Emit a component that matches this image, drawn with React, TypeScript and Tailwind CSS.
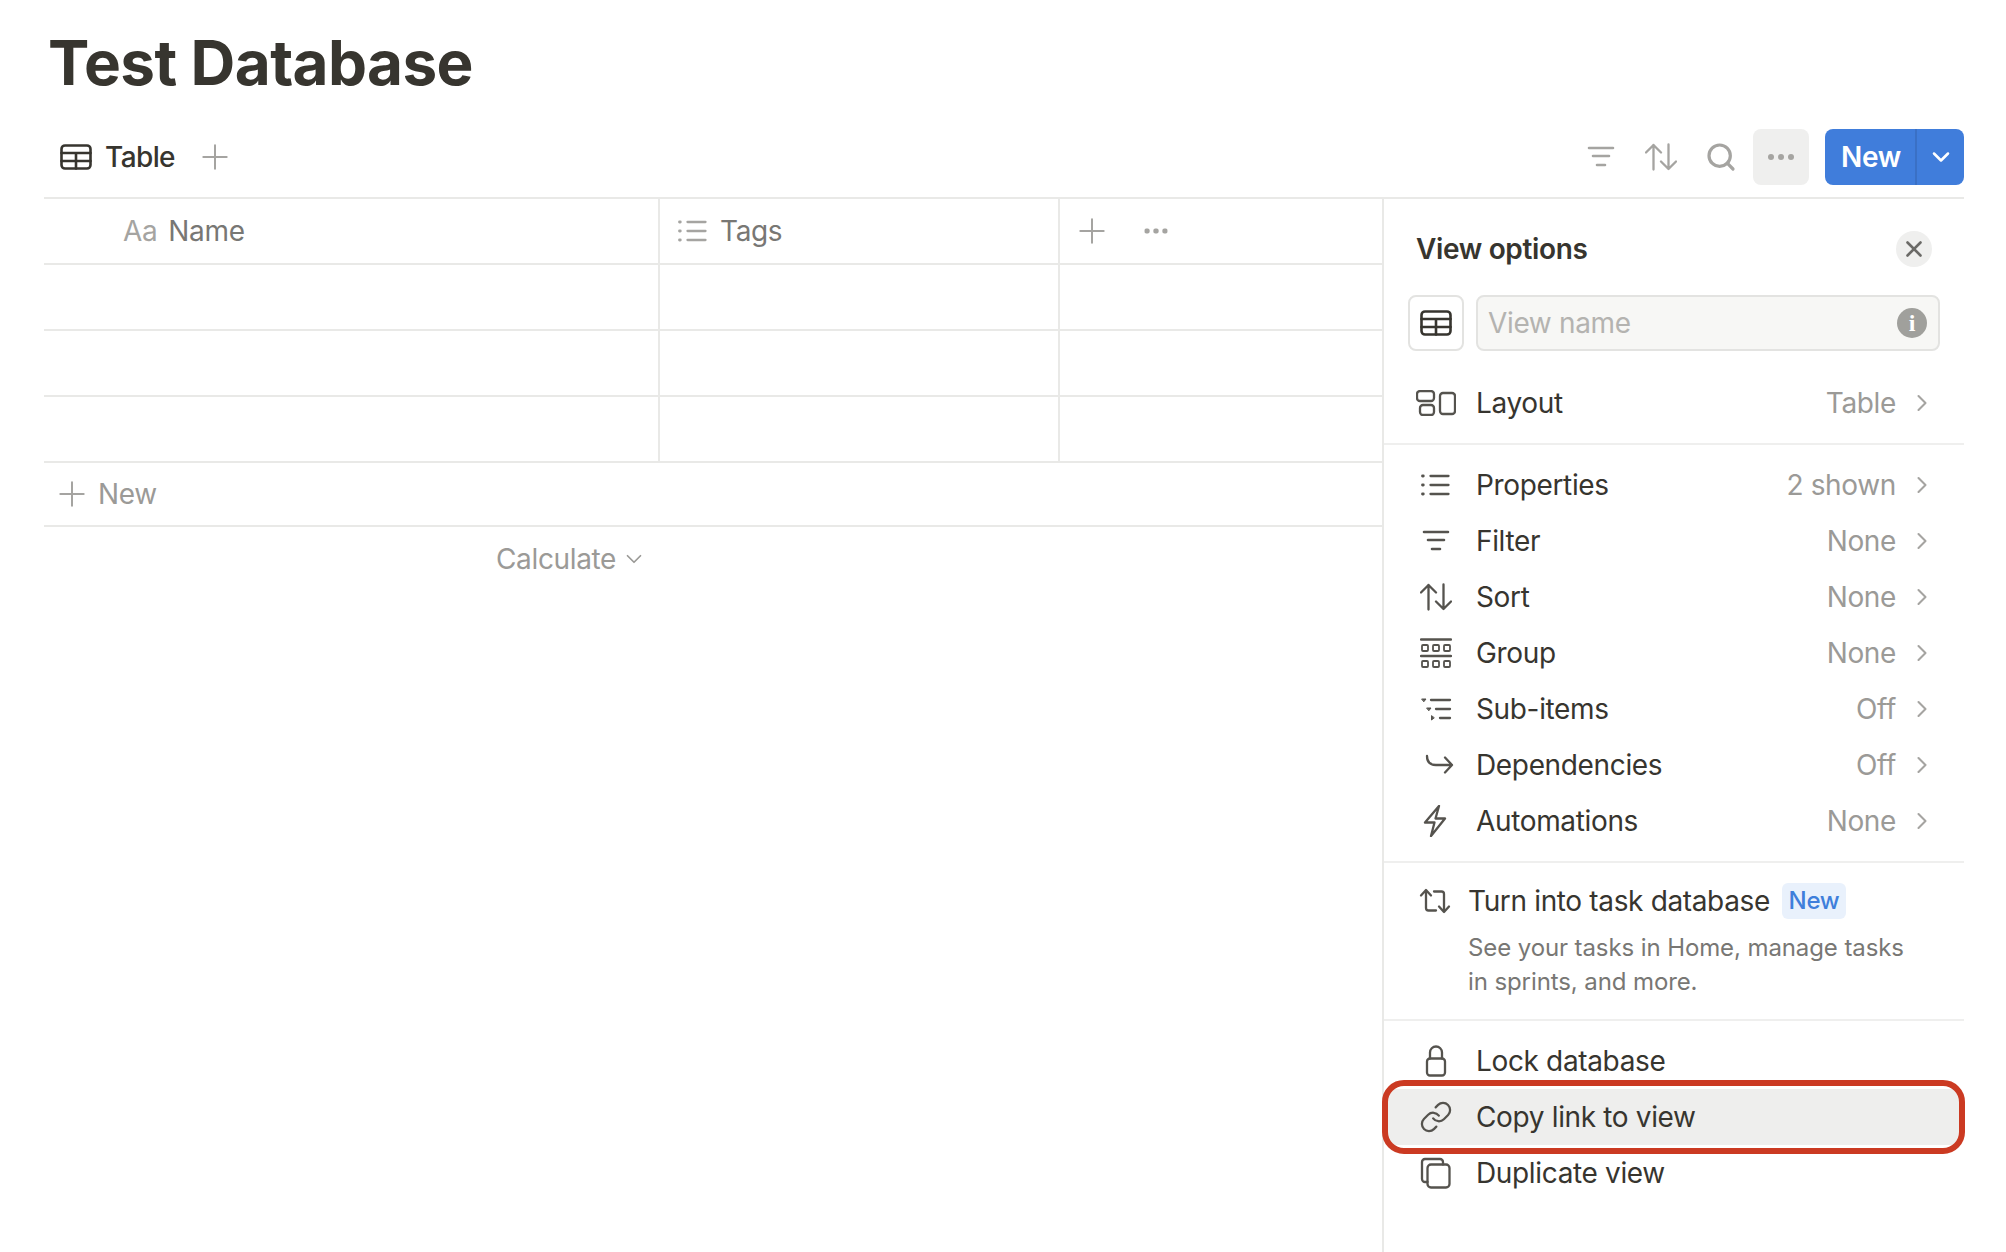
import React from 'react';
import { ChevronDown, ChevronRight, Link, Plus, Search, X } from 'lucide-react';

type IconProps = { className?: string };

const Svg: React.FC<React.PropsWithChildren<IconProps & { w?: number; h?: number }>> = ({ w = 32, h = 32, className, children }) => (
  <svg
    width={w}
    height={h}
    viewBox={`0 0 ${w} ${h}`}
    fill="none"
    stroke="currentColor"
    strokeWidth="2.3"
    strokeLinecap="round"
    strokeLinejoin="round"
    className={className}
  >
    {children}
  </svg>
);

const TableIcon: React.FC<IconProps> = ({ className }) => (
  <Svg className={className}>
    <rect x="1.5" y="4.5" width="29" height="23" rx="3.5" strokeWidth="2.6" />
    <path d="M1.5 12h29M1.5 20h29M16 12v15.500" strokeWidth="2.6" />
  </Svg>
);

const LayoutIcon = () => (
  <Svg w={40} h={26}>
    <rect x="1" y="1" width="17" height="10" rx="3" />
    <rect x="4" y="15" width="14" height="10" rx="3" />
    <rect x="24" y="3" width="15" height="21" rx="3" />
  </Svg>
);

const ListIcon: React.FC<IconProps> = ({ className }) => (
  <Svg className={className}>
    <path d="M10.500 7h18M10.500 16h18M10.500 25h18" />
    <path d="M2.500 7h.8M2.500 16h.8M2.500 25h.8" strokeWidth="2.8" />
  </Svg>
);

const FilterIcon: React.FC<IconProps> = ({ className }) => (
  <Svg className={className}>
    <path d="M4 7h24M8 15h16M12 24h8" strokeWidth="2.6" />
  </Svg>
);

const SortIcon: React.FC<IconProps> = ({ className }) => (
  <Svg className={className}>
    <path d="M8.500 28.500V4M1 11.500l7.500-7.500 7.500 7.500" />
    <path d="M23.500 3.500V28M16 20.500l7.500 7.500 7.500-7.500" />
  </Svg>
);

const GroupIcon = () => (
  <Svg>
    <path d="M1 2.500h30M1 19h30" />
    <rect x="2" y="8" width="6" height="6" rx="1" strokeWidth="1.8" />
    <rect x="13" y="8" width="6" height="6" rx="1" strokeWidth="1.8" />
    <rect x="24" y="8" width="6" height="6" rx="1" strokeWidth="1.8" />
    <rect x="2" y="24" width="6" height="6" rx="1" strokeWidth="1.8" />
    <rect x="13" y="24" width="6" height="6" rx="1" strokeWidth="1.8" />
    <rect x="24" y="24" width="6" height="6" rx="1" strokeWidth="1.8" />
  </Svg>
);

const SubItemsIcon = () => (
  <Svg>
    <path d="M11 7h19M16 16h14M20 25h10" />
    <path d="M2 6h4l-2 2.500zM7 15h4l-2 2.500zM11.500 23v4l2.500-2z" fill="currentColor" strokeWidth="1" />
  </Svg>
);

const DependencyIcon = () => (
  <Svg className="translate-x-[3px]">
    <path d="M4 7c0 6 3 9 9 9h16M22 8.500l7 7.500-7 7.500" />
  </Svg>
);

const BoltIcon = () => (
  <Svg>
    <path d="M19 1 5 17.500h9.500L11 31 25 13.500h-9.500z" />
  </Svg>
);

const TaskIcon = () => (
  <Svg>
    <path d="M2 10.500l5-5.500 5 5.500M7 5.500V23a2.500 2.500 0 0 0 2.500 2.500H17" />
    <path d="M30 21.500 25 27l-5-5.500M25 26.500V9A2.500 2.500 0 0 0 22.500 6.500H15" />
  </Svg>
);

const LockIcon = () => (
  <Svg>
    <rect x="7" y="13.500" width="18" height="17" rx="3" />
    <path d="M10 13.500V7.500a6 6 0 0 1 12 0v6" />
  </Svg>
);

const DuplicateIcon = () => (
  <Svg>
    <rect x="7.500" y="7.500" width="22" height="23" rx="3.500" />
    <path d="M7.500 25H5a3 3 0 0 1-3-3V5a3 3 0 0 1 3-3h15a3 3 0 0 1 3 3v2.500" />
  </Svg>
);

const Dots: React.FC<IconProps> = ({ className }) => (
  <svg width="26" height="6" viewBox="0 0 26 6" fill="currentColor" className={className}>
    <circle cx="3" cy="3" r="3" />
    <circle cx="13" cy="3" r="3" />
    <circle cx="23" cy="3" r="3" />
  </svg>
);

const OptionRow: React.FC<{ icon: React.ReactNode; label: string; value?: string }> = ({ icon, label, value }) => (
  <div className="flex h-14 items-center pl-[30px] pr-[28px]">
    <span className="mr-[18px] flex w-[44px] shrink-0 items-center justify-center text-[#55534e]">{icon}</span>
    <span className="flex-1 text-[#37352f]">{label}</span>
    {value && (
      <>
        <span className="text-[#9b9a97]">{value}</span>
        <ChevronRight size={28} strokeWidth={1.8} className="ml-[12px] text-[#a5a4a1]" />
      </>
    )}
  </div>
);

const rows = [0, 1, 2];

export default function App() {
  return (
    <div className="h-[1252px] w-[2006px] overflow-hidden bg-white font-['Inter',sans-serif] text-[28px] tracking-[-0.35px] text-[#37352f]">
      <h1 className="pl-[48px] pt-[23px] text-[62px] font-bold leading-[80px] tracking-[-0.6px]">Test Database</h1>

      {/* Toolbar */}
      <div className="ml-[44px] mr-[42px] mt-[26px] flex items-center justify-between border-b-2 border-[#e9e9e7] pb-[12px]">
        <div className="flex h-14 items-center pl-[16px]">
          <TableIcon className="text-[#37352f]" />
          <span className="ml-[13px] font-medium tracking-[-0.6px]">Table</span>
          <Plus size={40} strokeWidth={1.2} className="ml-[20px] text-[#a5a4a1]" />
        </div>
        <div className="flex items-center gap-1 text-[#a5a4a1]">
          <button className="flex h-14 w-14 items-center justify-center"><FilterIcon /></button>
          <button className="flex h-14 w-14 items-center justify-center"><SortIcon /></button>
          <button className="flex h-14 w-14 items-center justify-center"><Search size={32} strokeWidth={2.4} /></button>
          <button className="flex h-14 w-14 items-center justify-center rounded-lg bg-[#efefee]"><Dots /></button>
          <div className="ml-3 flex h-14 w-[139px] overflow-hidden rounded-lg bg-[#407ddb] text-white">
            <span className="flex w-[92px] items-center justify-center border-r-2 border-[#3a70c5] pl-[2px] font-semibold">New</span>
            <span className="flex flex-1 items-center justify-center"><ChevronDown size={28} strokeWidth={2.2} /></span>
          </div>
        </div>
      </div>

      <div className="ml-[44px] mr-[42px] flex">
        {/* Table */}
        <div className="min-w-0 flex-1">
          <div className="flex h-[66px] border-b-2 border-[#e9e9e7] text-[#787774]">
            <div className="flex w-[616px] items-center border-r-2 border-[#e9e9e7] pl-[79px]">
              <span className="text-[#a5a4a1]">Aa</span>
              <span className="ml-[11px]">Name</span>
            </div>
            <div className="flex w-[400px] items-center border-r-2 border-[#e9e9e7] pl-[17px]">
              <ListIcon className="text-[#a5a4a1]" />
              <span className="ml-[11px]">Tags</span>
            </div>
            <div className="flex flex-1 items-center pl-[12px] text-[#a5a4a1]">
              <Plus size={40} strokeWidth={1.2} />
              <Dots className="ml-[31px] scale-90" />
            </div>
          </div>
          {rows.map((r) => (
            <div key={r} className="flex h-[66px] border-b-2 border-[#e9e9e7]">
              <div className="w-[616px] border-r-2 border-[#e9e9e7]" />
              <div className="w-[400px] border-r-2 border-[#e9e9e7]" />
            </div>
          ))}
          <div className="flex h-[64px] items-center border-b-2 border-[#e9e9e7] pl-[8px] text-[#9b9a97]">
            <Plus size={40} strokeWidth={1.2} className="text-[#a5a4a1]" />
            <span className="ml-[6px]">New</span>
          </div>
          <div className="flex h-[64px] items-center pl-[452px] text-[#9b9a97]">
            <span>Calculate</span>
            <ChevronDown size={26} strokeWidth={1.6} className="ml-[5px]" />
          </div>
        </div>

        {/* View options panel */}
        <div className="h-[1053px] w-[582px] shrink-0 border-l-2 border-[#e9e9e7]">
          <div className="mt-[32px] flex h-9 items-center justify-between pl-[32px] pr-[32px]">
            <span className="font-semibold">View options</span>
            <span className="flex h-9 w-9 items-center justify-center rounded-full bg-[#efefee] text-[#6b6a67]">
              <X size={26} strokeWidth={2.4} />
            </span>
          </div>

          <div className="mt-[28px] flex h-14 pl-[24px] pr-[24px]">
            <span className="flex h-14 w-14 items-center justify-center rounded-lg border-2 border-[#e3e3e1] text-[#37352f]">
              <TableIcon />
            </span>
            <div className="relative ml-3 flex flex-1 items-center rounded-lg border-2 border-[#e3e3e1] bg-[#f7f7f5] pl-[10px] text-[#b4b3b0]">
              View name
              <span className="absolute right-[11px] top-[11px] flex h-[30px] w-[30px] items-center justify-center rounded-full bg-[#a0a09c] font-['Liberation_Serif',serif] text-[24px] font-bold leading-none text-white">i</span>
            </div>
          </div>

          <div className="mt-[24px]">
            <OptionRow icon={<LayoutIcon />} label="Layout" value="Table" />
          </div>
          <div className="mt-[12px] h-[2px] bg-[#efefee]" />

          <div className="mt-[12px]">
            <OptionRow icon={<ListIcon />} label="Properties" value="2 shown" />
            <OptionRow icon={<FilterIcon />} label="Filter" value="None" />
            <OptionRow icon={<SortIcon />} label="Sort" value="None" />
            <OptionRow icon={<GroupIcon />} label="Group" value="None" />
            <OptionRow icon={<SubItemsIcon />} label="Sub-items" value="Off" />
            <OptionRow icon={<DependencyIcon />} label="Dependencies" value="Off" />
            <OptionRow icon={<BoltIcon />} label="Automations" value="None" />
          </div>
          <div className="mt-[12px] h-[2px] bg-[#efefee]" />

          <div className="mt-[20px] pl-[30px] pr-[28px]">
            <div className="flex h-9 items-center">
              <span className="mr-[12px] flex w-[42px] shrink-0 items-center justify-center text-[#55534e]"><TaskIcon /></span>
              <span>Turn into task database</span>
              <span className="ml-[12px] flex h-9 w-[64px] items-center justify-center rounded-md bg-[#e9f1fc] text-[24px] font-medium text-[#3f7fdb]">New</span>
            </div>
            <p className="mt-[12px] pl-[54px] text-[24px] leading-[34px] tracking-[-0.1px] text-[#787774]">
              See your tasks in Home, manage tasks
              <br />
              in sprints, and more.
            </p>
          </div>
          <div className="mt-[20px] h-[2px] bg-[#efefee]" />

          <div className="mt-[12px]">
            <OptionRow icon={<LockIcon />} label="Lock database" />
            <div className="relative">
              <div className="mx-[4px] bg-[#eeeeed]">
                <div className="-mx-[4px]">
                  <OptionRow icon={<Link size={34} strokeWidth={1.6} />} label="Copy link to view" />
                </div>
              </div>
              <span className="absolute -inset-y-[9px] -left-[2px] -right-[1px] rounded-[22px] border-[6px] border-[#cb3a22]" />
            </div>
            <OptionRow icon={<DuplicateIcon />} label="Duplicate view" />
          </div>
        </div>
      </div>
    </div>
  );
}
